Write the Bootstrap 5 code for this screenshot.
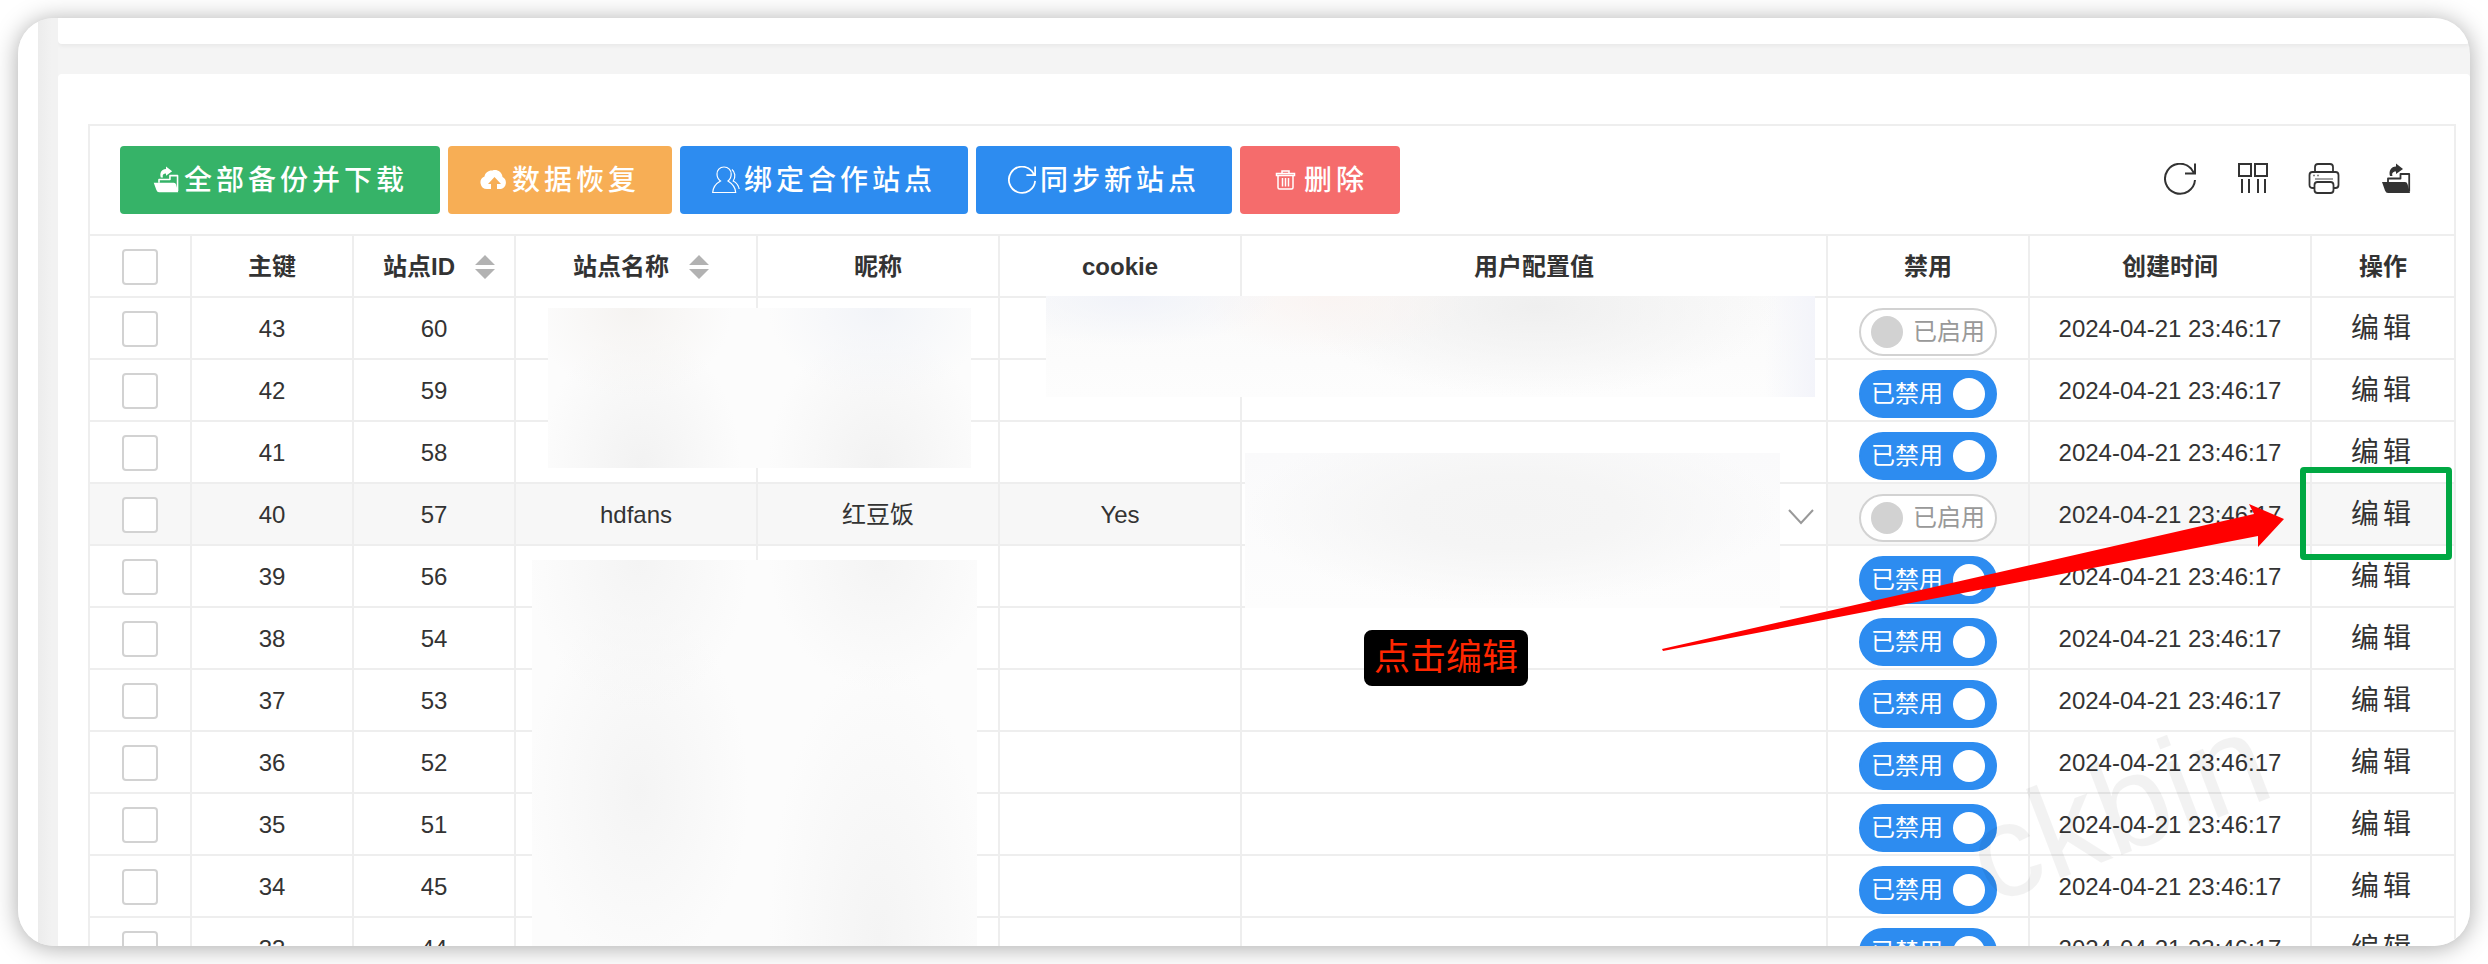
<!DOCTYPE html>
<html lang="zh-CN">
<head>
<meta charset="utf-8">
<meta name="viewport" content="width=device-width, initial-scale=1">
<title>站点管理</title>
<link href="https://cdn.jsdelivr.net/npm/bootstrap@5.3.0/dist/css/bootstrap.min.css" rel="stylesheet">
<style>
  body { font-family: "Liberation Sans", "Noto Sans CJK SC", sans-serif; font-size: 24px; line-height: 32px; color: #333; background: #fff; }
  .window { border-radius: 36px; box-shadow: 0 2px 24px rgba(0,0,0,.34); margin: 18px; height: calc(100vh - 36px); background: #f4f4f4; }
  .side { flex: 0 0 20px; background: #fff; }
  .gutter { flex: 0 0 20px; background: linear-gradient(90deg, #ececec, #f2f2f2 70%); }
  .panel-top { height: 26px; background: #fff; border-radius: 0 0 4px 4px; box-shadow: 0 2px 4px rgba(0,0,0,.05); margin-bottom: 30px; flex: none; }
  .panel-main { background: #fff; border-radius: 4px 4px 0 0; padding: 50px 14px 0 30px; }
  .grid-view { border: solid #eee; border-width: 2px 0 0 2px; }
  .toolbar { padding: 20px 32px 20px 30px; border: solid #eee; border-width: 0 2px 2px 0; }
  .tool-btn { --bs-btn-border-radius: 4px; --bs-btn-border-width: 0; --bs-btn-color: #fff; height: 68px; padding: 2px 32px 0; font-size: 28px; font-weight: 500; letter-spacing: 4px; line-height: 66px; display: flex; align-items: center; color: #fff; }
  .tool-btn svg { width: 28px; height: 28px; margin: 0 4px 2px 0; flex: none; }
  .bg-go { background: #36b368; } .bg-warn { background: #f7ae55; } .bg-main { background: #2d8cf0; } .bg-del { background: #f56c6c; }
  .tool-set { gap: 20px; }
  .tool-icon { width: 52px; height: 52px; padding: 9px 10px 11px; border: 0; background: none; display: block; color: #333; }
  .tool-icon svg { width: 32px; height: 32px; display: block; }
  .sites { table-layout: fixed; margin: 0; border-collapse: separate; border-spacing: 0; color: #333; --bs-table-bg: transparent; }
  .sites > * > tr > * { padding: 2px 0 0; height: 62px; border: solid #eee; border-width: 0 2px 2px 0; text-align: center; vertical-align: middle; white-space: nowrap; color: #333; }
  .sites .w-check { width: 102px; } .sites .w-id { width: 162px; } .sites .w-name { width: 242px; }
  .sites .w-off { width: 202px; } .sites .w-time { width: 282px; } .sites .w-act { width: 144px; }
  .sites .active-row > td { background: #f7f7f7; }
  .sites .active-row > .cfg { background: #fff; text-align: right; padding-right: 12px; }
  .cfg svg { width: 26px; height: 16px; display: inline-block; }
  .tick.form-check-input { width: 36px; height: 36px; margin: 0; border: 2px solid #d2d2d2; border-radius: 4px; display: inline-block; vertical-align: middle; }
  .sorter { width: 20px; height: 24px; margin: 0 -10px 4px 20px; vertical-align: middle; }
  .flip { position: relative; display: block; width: 138px; height: 48px; margin: 6px auto 0; }
  .flip input { appearance: none; position: absolute; inset: 0; margin: 0; width: 100%; height: 100%; border: 2px solid #d2d2d2; border-radius: 24px; background: #fff; }
  .flip input::before { content: ""; position: absolute; top: 6px; left: 10px; width: 32px; height: 32px; border-radius: 50%; background: #d2d2d2; }
  .flip input:checked { background: #2d8cf0; border-color: #2d8cf0; }
  .flip input:checked::before { left: 92px; background: #fff; }
  .flip span { position: relative; display: block; line-height: 48px; text-align: left; padding-left: 54px; color: #999; pointer-events: none; }
  .flip input:checked + span { padding-left: 12px; color: #fff; }
  .edit { font-size: 28px; letter-spacing: 4px; color: #333; text-decoration: none; }
  .focus-box { position: absolute; z-index: 3; border: 6px solid #00a843; border-radius: 4px; width: 152px; height: 93px; right: 4px; top: 341px; }
  .veil { position: absolute; z-index: 1; }
  .veil-a { left: 458px; top: 182px; width: 423px; height: 160px; background: radial-gradient(ellipse 100px 90px at 20% 0, #f5f3f1, transparent), radial-gradient(ellipse 110px 90px at 78% 0, #f2f4f8, transparent), radial-gradient(ellipse 100px 140px at 22% 100%, #f2f2f2, transparent), radial-gradient(ellipse 110px 140px at 78% 100%, #f2f2f2, transparent), #fcfcfc; }
  .veil-b { left: 442px; top: 434px; width: 445px; bottom: 0; background: radial-gradient(ellipse 110px 150px at 24% 0, #f4f4f4, transparent), radial-gradient(ellipse 110px 130px at 78% 0, #f4f4f4, transparent), radial-gradient(ellipse 110px 190px at 24% 55%, #f4f4f4, transparent), radial-gradient(ellipse 110px 280px at 78% 90%, #f4f4f4, transparent), #fcfcfc; }
  .veil-c { left: 956px; top: 170px; right: 641px; height: 101px; background: radial-gradient(ellipse 150px 50px at 11% 0, #f1f3f9, transparent), radial-gradient(ellipse 140px 60px at 37% 0, #faf4f2, transparent), radial-gradient(ellipse 240px 90px at 64% 10%, #efefef, transparent), linear-gradient(270deg, #f3f4fa, transparent 50px), linear-gradient(#fafafa, #fdfdfd); }
  .veil-d { left: 1155px; top: 327px; right: 676px; height: 155px; background: radial-gradient(ellipse 50% 60% at 50% 38%, #f4f4f4, #f5f5f5 40%, transparent), linear-gradient(#fafafb, #fdfdfd); }
  .hint { position: absolute; z-index: 3; right: 928px; top: 504px; width: 164px; height: 56px; line-height: 56px; font-size: 36px; text-align: center; color: #ff2600; background: #000; border-radius: 8px; }
  .arrow { position: absolute; z-index: 4; right: 172px; top: 374px; width: 622px; height: 152px; }
  .stamp { position: absolute; z-index: 2; right: 184px; top: 616px; font-size: 132px; line-height: 132px; color: rgba(0,0,0,.05); transform: rotate(-21deg); pointer-events: none; }
</style>
</head>
<body class="overflow-hidden">
<svg class="d-none" xmlns="http://www.w3.org/2000/svg">
  <symbol id="i-out" viewBox="0 0 32 32"><path fill="currentColor" d="M2 19h23q2 0 2.500 2L30 30H8q-2 0-3-2.500z"/><path fill="none" stroke="currentColor" stroke-width="1.800" stroke-linejoin="round" d="M8 19v-3.500h12.500V11h8.700v17.500"/><path fill="currentColor" d="M16 .5l7 5.500-7 5V8.500c-3 0-4.500 1.500-3.500 4.500H10C8.500 8 11 3.500 16 3.500z"/></symbol>
  <symbol id="i-cloud" viewBox="0 0 28 28"><path fill="currentColor" fill-rule="evenodd" d="M11 23H7a6.500 6.500 0 0 1-2.500-12.500C5 6.500 9 4 12.500 4.500 16 3 22 5 22.500 11A6.500 6.500 0 0 1 21 23h-4v-5h4l-6.500-7L8 18h3z"/></symbol>
  <symbol id="i-users" viewBox="0 0 28 28"><path fill="none" stroke="currentColor" stroke-width="1.200" d="M12 1c-4.500 0-7 3.500-7 7 0 3 1.300 5.500 3.500 7C4 17.500 1 21 .7 26.500h23C23.500 21 20 17.500 16 15c2-1.500 3.200-4 3.200-7 0-3.500-2.700-7-7.200-7zM20 3.500c3 2.500 4 7.500 1.200 11.500 3 1.500 5.300 4.500 6 8"/></symbol>
  <symbol id="i-refresh" viewBox="0 0 32 32"><path fill="none" stroke="currentColor" stroke-width="2" d="M31 17A15 15 0 1 1 27 5.500l3 4.500M31 .5v10H21"/></symbol>
  <symbol id="i-trash" viewBox="0 0 28 28"><path fill="none" stroke="currentColor" stroke-width="1.500" d="M4.500 9.500v-2h18v2zM6 10v11.500q0 1.500 1.500 1.500h12q1.500 0 1.500-1.500V10M10 7V5h7v2M10.500 12v8.500M13.500 12v8.500M16.500 12v8.500"/></symbol>
  <symbol id="i-cols" viewBox="0 0 32 32"><path fill="none" stroke="currentColor" stroke-width="2" d="M3 1h12v12H3zM19 1h12v12H19zM6 16v14M13 16v14M22 16v14M29 16v14"/></symbol>
  <symbol id="i-print" viewBox="0 0 32 32"><path fill="none" stroke="currentColor" stroke-width="1.800" d="M7 9V4q0-3 3-3h12q3 0 3 3v5M6 25H5q-3.500 0-3.500-3V12q0-3 3-3h23q3 0 3 3v10q0 3-3 3H26M9.500 19h13q3 0 3 3v5q0 3-3 3h-13q-3 0-3-3v-5q0-3 3-3z"/><path fill="none" stroke="currentColor" stroke-width="1.500" d="M7 16h18M5 12.500h2M9 12.500h2" opacity=".6"/></symbol>
  <symbol id="i-sort" viewBox="0 0 20 24"><path fill="#b2b2b2" d="M10 0l10 10H0zM0 14h20L10 24z"/></symbol>
</svg>

<div class="window d-flex overflow-hidden">
  <div class="side"></div>
  <div class="gutter"></div>
  <main class="flex-grow-1 d-flex flex-column overflow-hidden">
    <div class="panel-top"></div>
    <div class="panel-main flex-grow-1">
      <div class="grid-view position-relative">
        <div class="toolbar d-flex align-items-center justify-content-between">
          <div class="d-flex gap-2">
            <button type="button" class="btn tool-btn bg-go"><svg><use href="#i-out"/></svg>全部备份并下载</button>
            <button type="button" class="btn tool-btn bg-warn"><svg><use href="#i-cloud"/></svg>数据恢复</button>
            <button type="button" class="btn tool-btn bg-main"><svg><use href="#i-users"/></svg>绑定合作站点</button>
            <button type="button" class="btn tool-btn bg-main"><svg><use href="#i-refresh"/></svg>同步新站点</button>
            <button type="button" class="btn tool-btn bg-del"><svg><use href="#i-trash"/></svg>删除</button>
          </div>
          <div class="tool-set d-flex">
            <button type="button" class="tool-icon" aria-label="刷新"><svg><use href="#i-refresh"/></svg></button>
            <button type="button" class="tool-icon" aria-label="筛选列"><svg><use href="#i-cols"/></svg></button>
            <button type="button" class="tool-icon" aria-label="打印"><svg><use href="#i-print"/></svg></button>
            <button type="button" class="tool-icon" aria-label="导出"><svg><use href="#i-out"/></svg></button>
          </div>
        </div>
        <table class="table sites">
          <thead>
            <tr>
              <th class="w-check"><input class="form-check-input tick" type="checkbox" aria-label="全选"></th>
              <th class="w-id">主键</th>
              <th class="w-id">站点ID<svg class="sorter"><use href="#i-sort"/></svg></th>
              <th class="w-name">站点名称<svg class="sorter"><use href="#i-sort"/></svg></th>
              <th class="w-name">昵称</th>
              <th class="w-name">cookie</th>
              <th>用户配置值</th>
              <th class="w-off">禁用</th>
              <th class="w-time">创建时间</th>
              <th class="w-act">操作</th>
            </tr>
          </thead>
          <tbody id="rows"></tbody>
        </table>
        <div class="veil veil-a"></div>
        <div class="veil veil-b"></div>
        <div class="veil veil-c"></div>
        <div class="veil veil-d"></div>
        <div class="stamp" aria-hidden="true">ckbin</div>
        <div class="hint">点击编辑</div>
        <div class="focus-box"></div>
        <svg class="arrow" viewBox="0 0 622 152"><path fill="#f00" d="M0 149L592 14l-5-10 35 15-26 28v-11L1 151z"/></svg>
      </div>
    </div>
  </main>
</div>

<script>
  const rows = [[43, 60, 0], [42, 59, 1], [41, 58, 1], [40, 57, 0, 'hdfans', '红豆饭', 'Yes'], [39, 56, 1], [38, 54, 1], [37, 53, 1], [36, 52, 1], [35, 51, 1], [34, 45, 1], [33, 44, 1]];
  const chevron = '<svg viewBox="0 0 26 16"><path d="M1 1l12 13L25 1" fill="none" stroke="#999" stroke-width="2"/></svg>';
  document.getElementById('rows').innerHTML = rows.map(([id, site, off, name = '', nick = '', cookie = '']) => `
    <tr class="${name ? 'active-row' : ''}">
      <td><input class="form-check-input tick" type="checkbox" aria-label="选择 ${id}"></td>
      <td>${id}</td><td>${site}</td><td>${name}</td><td>${nick}</td><td>${cookie}</td>
      <td class="cfg">${name ? chevron : ''}</td>
      <td><label class="flip"><input type="checkbox" ${off ? 'checked' : ''}><span>${off ? '已禁用' : '已启用'}</span></label></td>
      <td>2024-04-21 23:46:17</td>
      <td><a class="edit" href="#edit-${id}">编辑</a></td>
    </tr>`).join('');
</script>
<script src="https://cdn.jsdelivr.net/npm/bootstrap@5.3.0/dist/js/bootstrap.bundle.min.js"></script>
</body>
</html>
